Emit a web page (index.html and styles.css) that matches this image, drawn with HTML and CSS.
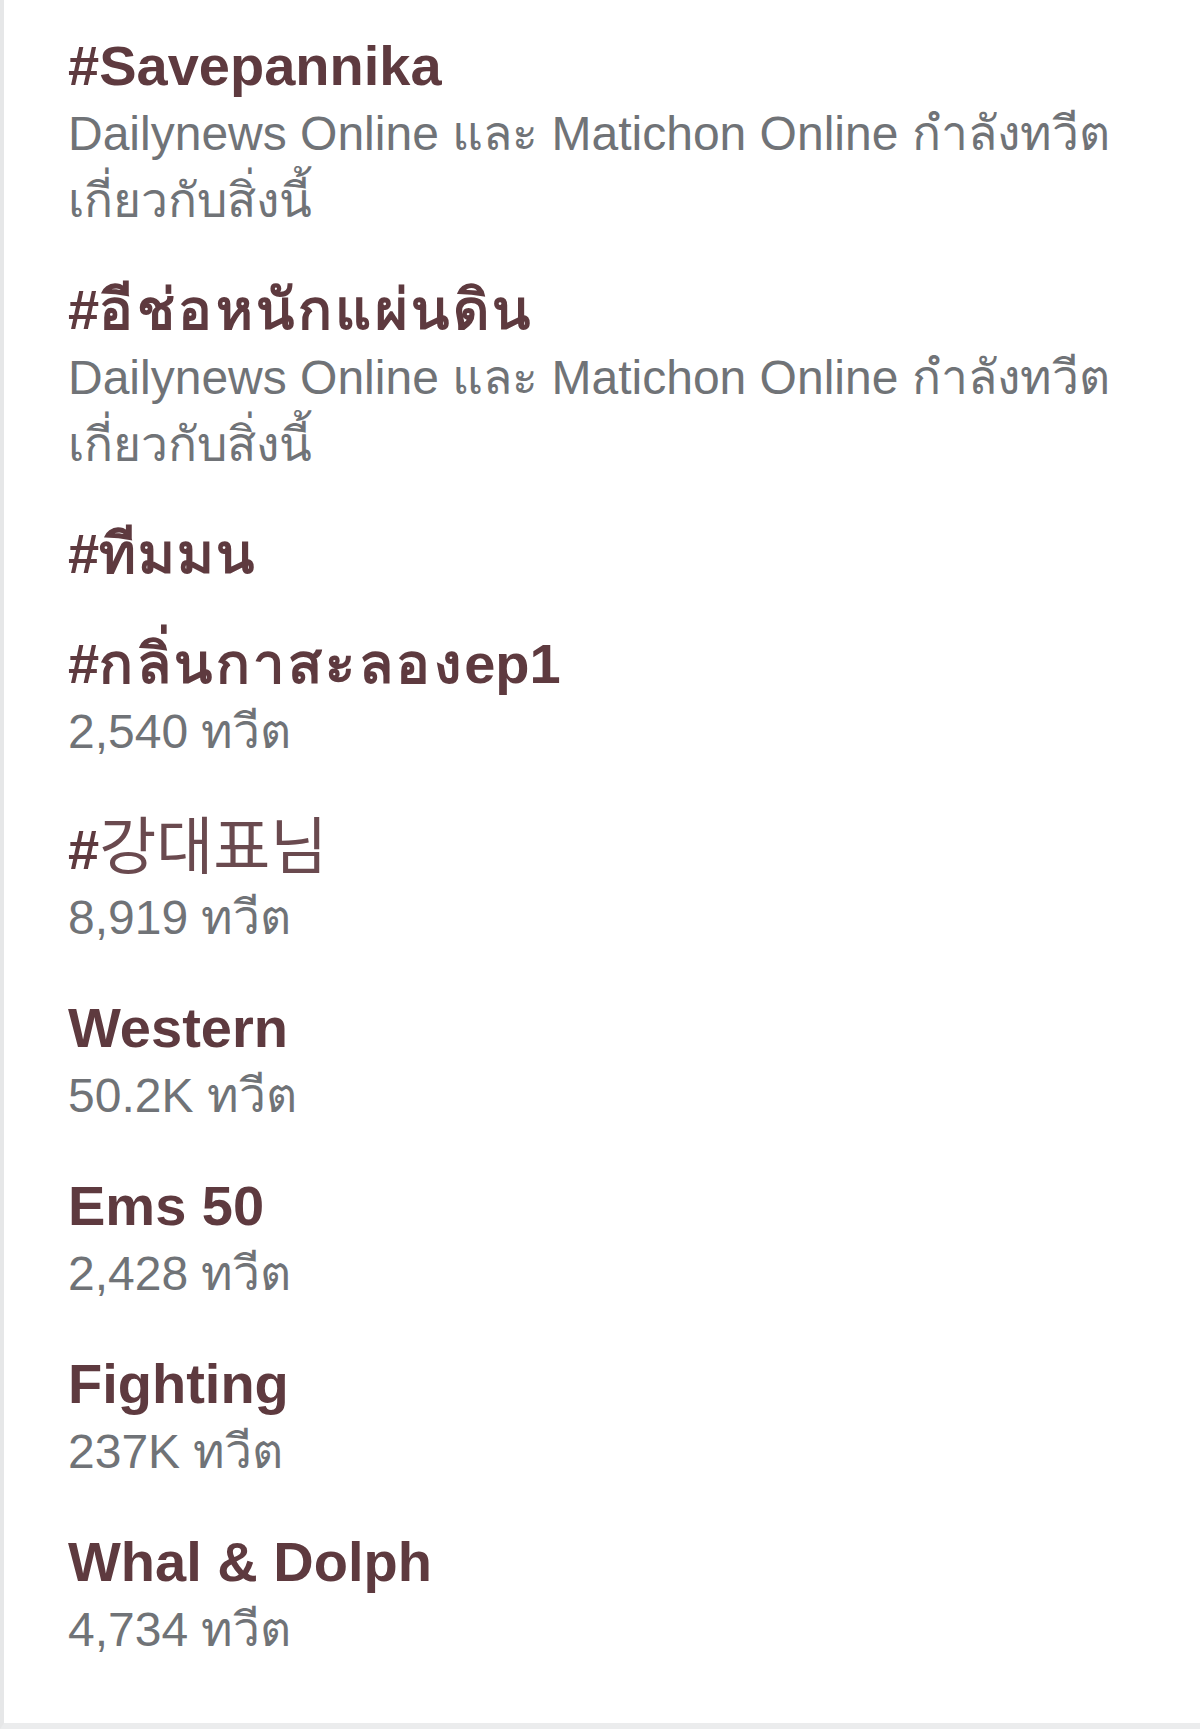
FILE: index.html
```html
<!DOCTYPE html>
<html lang="th">
<head>
<meta charset="utf-8">
<title>Trends</title>
<link rel="stylesheet" href="styles.css">
</head>
<body>
<div class="panel">
  <ul class="trends">
    <li class="trend">
      <div class="name">#Savepannika</div>
      <div class="meta meta-desc">Dailynews Online และ Matichon Online กำลังทวีต<br>เกี่ยวกับสิ่งนี้</div>
    </li>
    <li class="trend">
      <div class="name">#<span class="thai">อีช่อหนักแผ่นดิน</span></div>
      <div class="meta meta-desc">Dailynews Online และ Matichon Online กำลังทวีต<br>เกี่ยวกับสิ่งนี้</div>
    </li>
    <li class="trend">
      <div class="name">#<span class="thai thai-tight">ทีมมน</span></div>
    </li>
    <li class="trend">
      <div class="name">#<span class="thai">กลิ่นกาสะลอง</span>ep1</div>
      <div class="meta">2,540 ทวีต</div>
    </li>
    <li class="trend">
      <div class="name">#<span class="cjk">강대표님</span></div>
      <div class="meta">8,919 ทวีต</div>
    </li>
    <li class="trend">
      <div class="name">Western</div>
      <div class="meta">50.2K ทวีต</div>
    </li>
    <li class="trend">
      <div class="name">Ems 50</div>
      <div class="meta">2,428 ทวีต</div>
    </li>
    <li class="trend">
      <div class="name">Fighting</div>
      <div class="meta">237K ทวีต</div>
    </li>
    <li class="trend">
      <div class="name">Whal &amp; Dolph</div>
      <div class="meta">4,734 ทวีต</div>
    </li>
  </ul>
</div>
</body>
</html>
```

FILE: styles.css
```css
html, body {
  margin: 0;
  padding: 0;
  background: #ffffff;
}

.panel {
  box-sizing: border-box;
  height: 1729px;
  border-left: 4px solid #e6e7e8;
  border-bottom: 6px solid #ebeced;
  background: #ffffff;
  padding: 32px 0 0 64px;
}

.trends {
  list-style: none;
  margin: 0;
  padding: 0;
  display: flex;
  flex-direction: column;
  gap: 42px;
}

.trend {
  display: flex;
  flex-direction: column;
}

.name {
  font-family: "Liberation Sans", Arial, sans-serif;
  font-weight: 700;
  font-size: 56px;
  line-height: 68px;
  color: #5e3a3f;
  white-space: nowrap;
}

.thai {
  letter-spacing: 3.5px;
}

.thai-tight {
  letter-spacing: 2px;
}

.cjk {
  font-family: "Noto Sans CJK KR", sans-serif;
  font-weight: 400;
  font-size: 62px;
  color: #6a4a4f;
}

.meta {
  font-family: "Liberation Sans", Arial, sans-serif;
  font-weight: 400;
  font-size: 48px;
  line-height: 68px;
  color: #707377;
  white-space: nowrap;
}

.meta-desc {
  line-height: 67px;
}
```
